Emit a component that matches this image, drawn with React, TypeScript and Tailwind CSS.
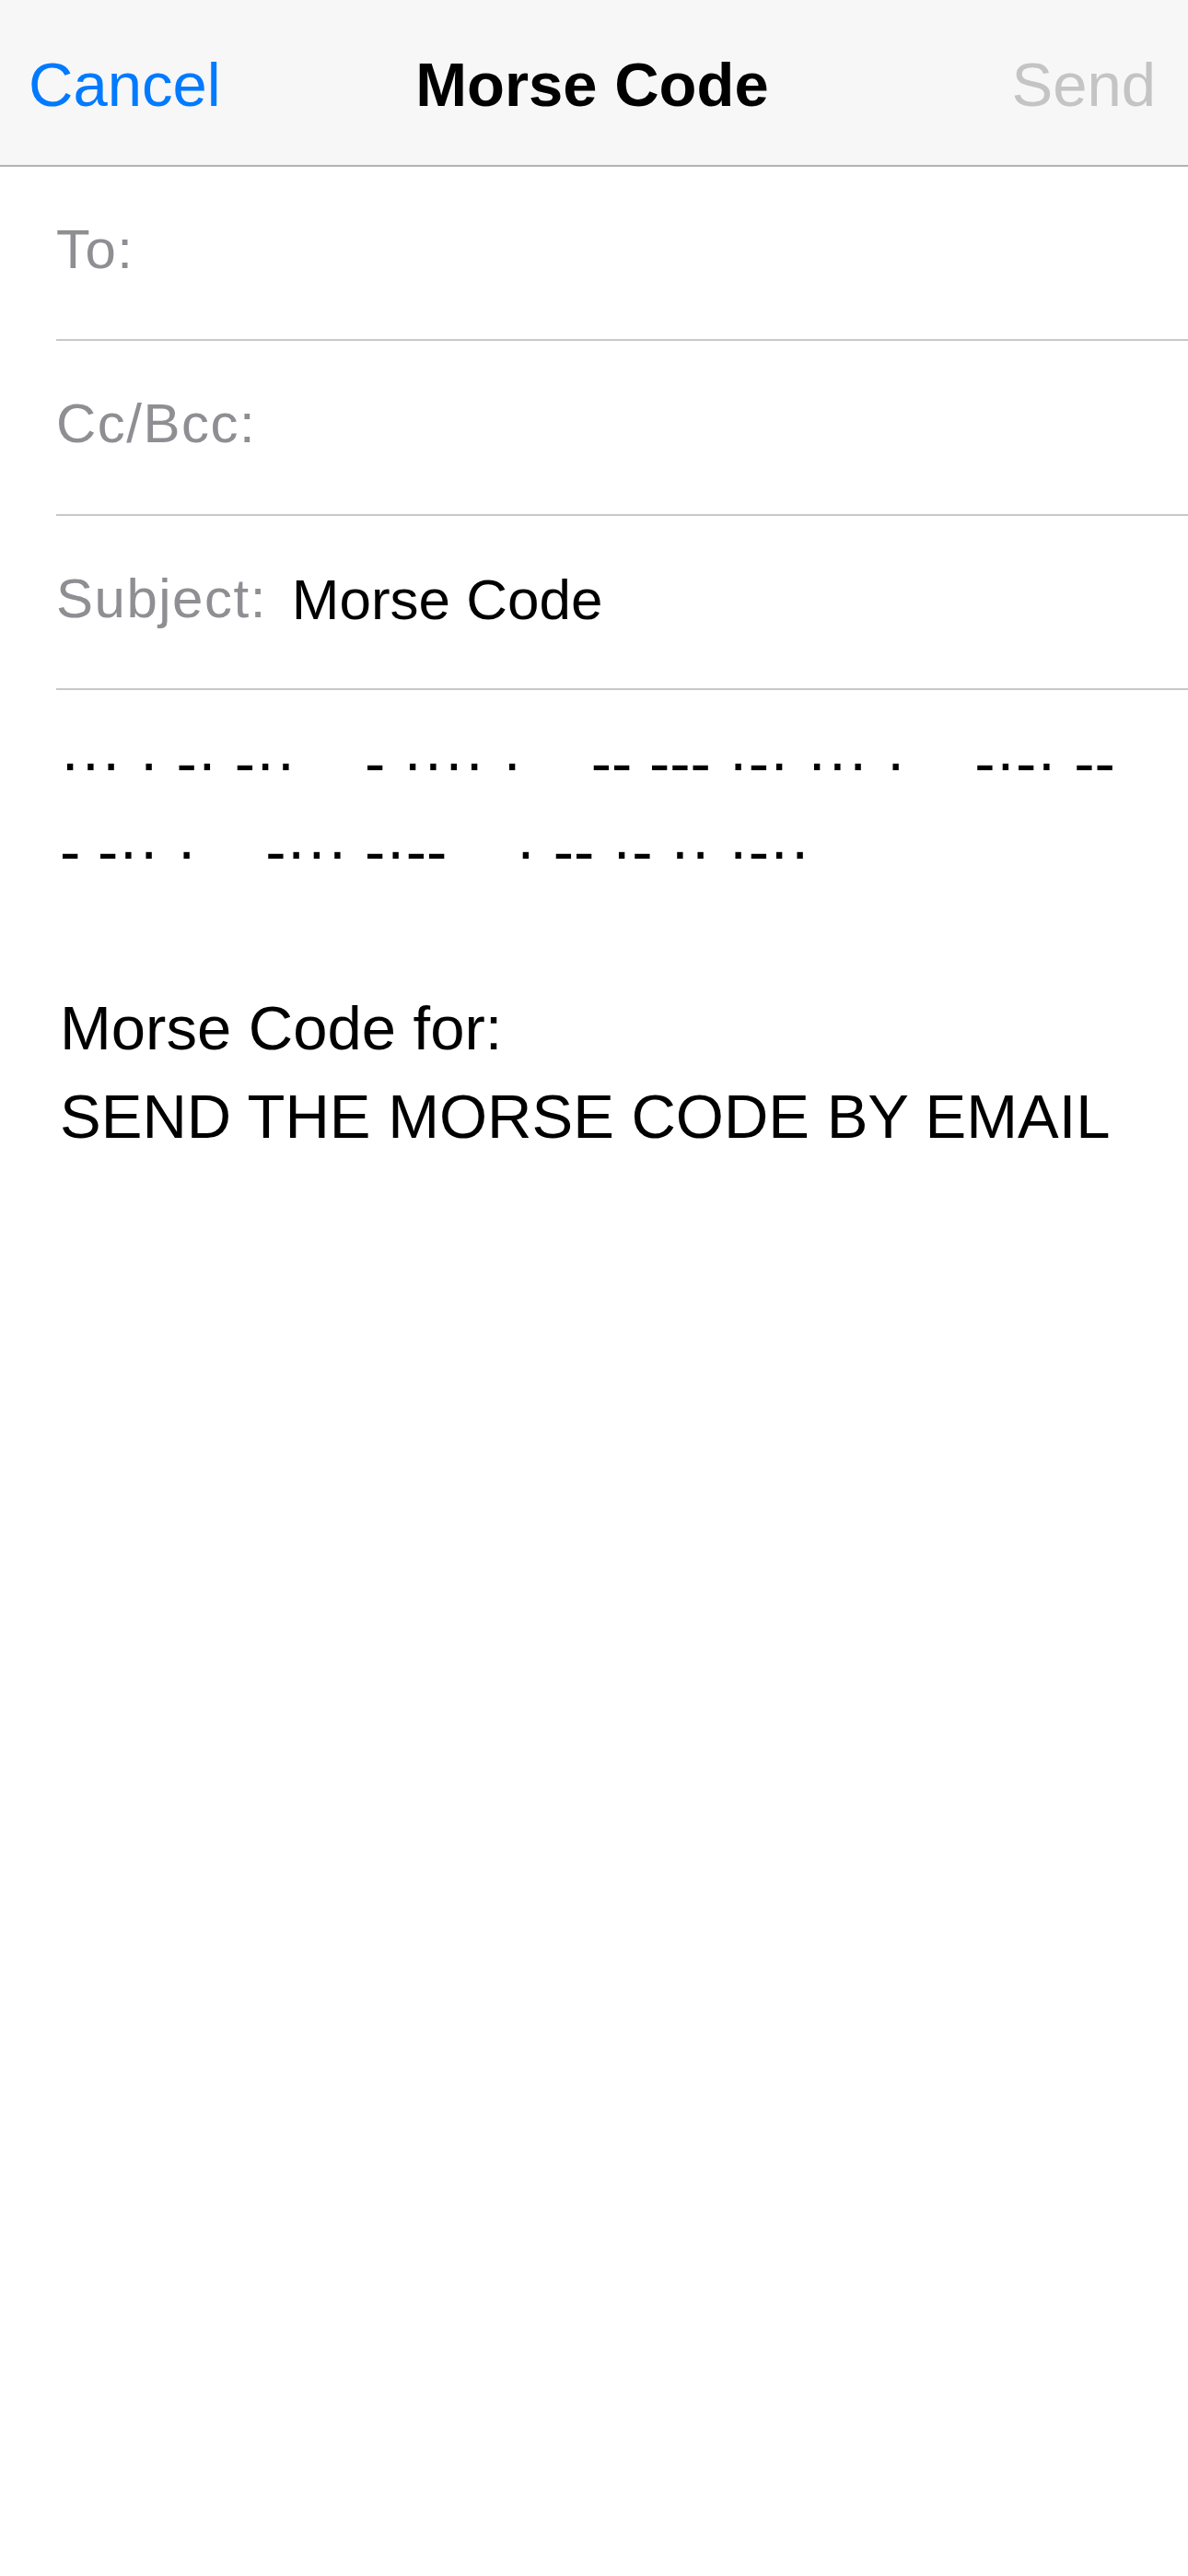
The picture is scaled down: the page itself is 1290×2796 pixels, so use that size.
import React from 'react';

const font = { fontFamily: '"Liberation Sans", Arial, sans-serif' };

const morseLines = [
  '··· · -· -··    - ···· ·    -- --- ·-· ··· ·    -·-· --',
  '- -·· ·    -··· -·--    · -- ·- ·· ·-··',
];

interface FieldRowProps {
  label: string;
  value?: string;
  height: string;
}

const FieldRow: React.FC<FieldRowProps> = ({ label, value, height }) => (
  <div className={`ml-[61px] ${height} border-b-2 border-[#c8c7cc] pt-[60px] flex items-start`}>
    <span className="text-[60px] leading-none tracking-[1.5px] text-[#8e8e93]">{label}</span>
    {value && <span className="ml-[27px] text-[62px] leading-none text-black">{value}</span>}
  </div>
);

const App: React.FC = () => {
  return (
    <div className="min-h-screen bg-white" style={font}>
      <nav className="h-[181px] bg-[#f7f7f7] border-b-2 border-[#b2b2b2] grid grid-cols-[1fr_auto_1fr] items-center pl-[31px] pr-[35px] pt-[3px]">
        <span className="text-[67px] leading-none text-[#007aff] justify-self-start">Cancel</span>
        <span className="text-[67px] leading-none font-bold text-black">Morse Code</span>
        <span className="text-[67px] leading-none text-[#c4c4c4] justify-self-end">Send</span>
      </nav>

      <FieldRow label="To:" height="h-[189px]" />
      <FieldRow label="Cc/Bcc:" height="h-[190px]" />
      <FieldRow label="Subject:" value="Morse Code" height="h-[189px]" />

      <div className="pl-[65px] pt-[31px] text-[67px] leading-[96px] text-black">
        {morseLines.map((line, i) => (
          <div key={i} className="whitespace-pre">{line}</div>
        ))}
        <div className="h-[96px]"></div>
        <div>Morse Code for:</div>
        <div>SEND THE MORSE CODE BY EMAIL</div>
      </div>
    </div>
  );
};

export default App;
